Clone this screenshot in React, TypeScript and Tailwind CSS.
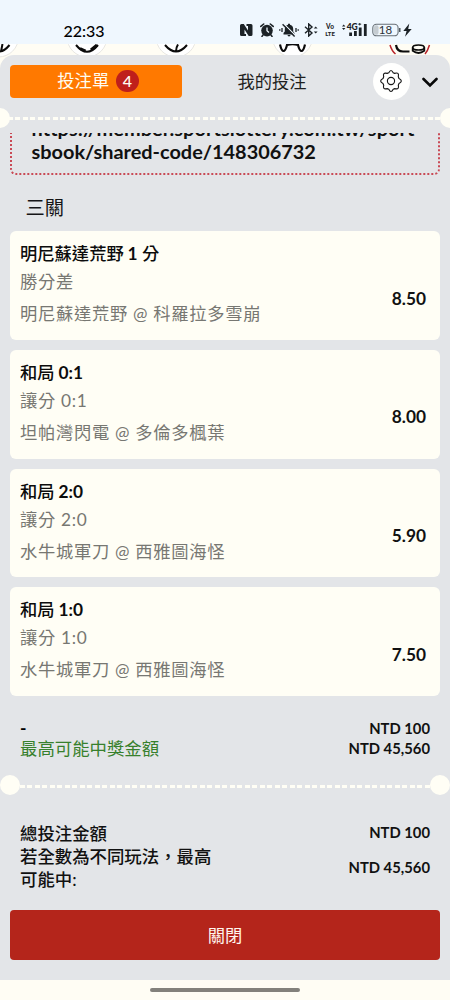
type Bet = {
    id: number;
    pick: string;
    score: string;
    unit?: string;
    market: string;
    match: string;
    odds: string;
};

const bets: Bet[] = [
    { id: 1, pick: '明尼蘇達荒野', score: '1', unit: '分', market: '勝分差', match: '明尼蘇達荒野 @ 科羅拉多雪崩', odds: '8.50' },
    { id: 2, pick: '和局', score: '0:1', market: '讓分 0:1', match: '坦帕灣閃電 @ 多倫多楓葉', odds: '8.00' },
    { id: 3, pick: '和局', score: '2:0', market: '讓分 2:0', match: '水牛城軍刀 @ 西雅圖海怪', odds: '5.90' },
    { id: 4, pick: '和局', score: '1:0', market: '讓分 1:0', match: '水牛城軍刀 @ 西雅圖海怪', odds: '7.50' },
];

function StatusBar() {
    return (
        <div className="flex h-11 items-start bg-[#eff7fe] pt-[23px] text-[#1c2226]">
            <span className="ml-[63.5px] w-[176.5px] text-[16px] leading-[15px] font-medium text-black">22:33</span>
            {/* nfc */}
            <svg className="h-[14px] w-[13px] shrink-0" viewBox="0 0 13 14">
                <path d="M1.5 1h2.3l4.2 6.500V3H6.5V1H11a1.5 1.5 0 0 1 1.5 1.5v9A1.5 1.5 0 0 1 11 13H8.7L4.5 6.500V11H6v2H1.5A1.5 1.5 0 0 1 0 11.500v-9A1.5 1.5 0 0 1 1.5 1z" fill="currentColor" />
            </svg>
            {/* alarm */}
            <svg className="ml-[6.5px] h-[14px] w-[14px] shrink-0" viewBox="0 0 14 14">
                <circle cx="7" cy="7.6" r="5.8" fill="currentColor" />
                <path d="M.8 3.4 3.7 1M13.2 3.4 10.3 1M3 12l-1 1.4M11 12l1 1.4" stroke="currentColor" strokeWidth="1.6" strokeLinecap="round" />
                <path d="M7 4.4v3.4l2 1.6" stroke="#eff7fe" strokeWidth="1.3" fill="none" />
            </svg>
            {/* silent */}
            <svg className="ml-[5px] h-[14px] w-[20px] shrink-0" viewBox="0 0 20 14">
                <path d="M4.5 11.500V10l1.3-1.500V6C5.8 3.600 7.3 2.100 9 1.800V.8h2v1c1.7.3 3.2 1.8 3.2 4.2v2.500L15.500 10v1.500zM8.2 12h3.6L10 13.800z" fill="currentColor" />
                <path d="m4.6.6 12 12.2" stroke="#eff7fe" strokeWidth="1.3" />
                <path d="m3.6 1.3 12 12.2" stroke="currentColor" strokeWidth="1.4" />
                <path d="M3 5v4M.8 6.2v1.6M17 5v4M19.2 6.2v1.6" stroke="currentColor" strokeWidth="1.3" />
            </svg>
            {/* bluetooth */}
            <svg className="ml-[5px] h-[14px] w-[14px] shrink-0" viewBox="0 0 14 14">
                <path d="m1 3.8 7 6.2-3.3 3V1L8 4 1 10.2" stroke="currentColor" strokeWidth="1.4" fill="none" />
                <path d="m9.8 5.6 1.9-2 1.9 2zM9.8 8.4l1.9 2 1.9-2z" fill="currentColor" />
            </svg>
            <div className="ml-[7px] w-[11px] shrink-0 text-center text-[6.5px] leading-[7px] font-black">
                <div>Vo</div>
                <div className="text-[6px]">LTE</div>
            </div>
            {/* 4G signal */}
            <svg className="ml-[6px] h-[14px] w-[26px] shrink-0" viewBox="0 0 26 14">
                <path d="m0 3.6 1.7-2 1.7 2zM0 5l1.7 2 1.7-2z" fill="currentColor" />
                <text x="4.7" y="6.8" fontSize="8.5" fontWeight="900" fill="currentColor">4G</text>
                <path d="M16.2 1.2h3M17.7 0v2.4" stroke="currentColor" strokeWidth=".9" />
                <path d="M7.2 9.5h2.8V13H7.2zM12 8h2.8v5H12zM16.8 4.5h2.8V13h-2.8zM21.9 1h2.8v12h-2.8z" fill="currentColor" />
            </svg>
            {/* battery */}
            <svg className="ml-[4.5px] h-[14px] w-[29px] shrink-0" viewBox="0 0 29 14">
                <rect x="2" y="2.3" width="4.5" height="9.5" rx="2" fill="#c5ccd1" />
                <rect x=".8" y="1.3" width="25.3" height="11.5" rx="3.6" fill="none" stroke="#687077" strokeWidth="1.1" />
                <path d="M27.8 5v4" stroke="#394147" strokeWidth="1.3" />
                <text x="13.5" y="11.2" fontSize="11.5" textAnchor="middle" fill="#2c3236">18</text>
            </svg>
            <svg className="ml-[2px] h-[14px] w-[9px] shrink-0" viewBox="0 0 9 14">
                <path d="M6.3.5.3 8h3.3L2 13.700 8.700 6H5.200z" fill="currentColor" />
            </svg>
        </div>
    );
}

// Lower edge of the sport category icons peeking out above the slip
function SportIcons() {
    return (
        <svg className="block h-[22px] w-full bg-[#fffdf4]" viewBox="0 44 450 22" fill="none" stroke="#0b0b0b" strokeWidth="2">
            <g fill="#fff" stroke="#e8e7e2" strokeWidth="1">
                <circle cx="-1.5" cy="37" r="20" />
                <circle cx="87" cy="37" r="20" />
                <circle cx="176" cy="37" r="20" />
                <circle cx="292.5" cy="37" r="20" />
            </g>
            <path d="M-12 45q11 13 21.500 0M1 51.500l1.500-7.500" />
            <path d="M76 45q11 13.500 22 0" />
            <path d="M80 48.500l5.500 2.500M91 50l6-5" strokeWidth="3" />
            <path d="M165 45q11 13 22 0M176 51.500q0-4 2-7" />
            <path d="M280 44.500q1.500 6.500 3.500 6.500t3.500-6q5.500-1.500 11 0 1.500 6 3.500 6t3.500-6.500" strokeWidth="2.2" />
            <path d="M390 45q1.800 6 5.500 9M429.500 45q-1.800 6-4.500 9" stroke="#b9252c" strokeWidth="1.5" />
            <path d="M396 45q1 6.500 7 6.500h6.500" strokeWidth="2.2" />
            <ellipse cx="418.5" cy="47.5" rx="5.8" ry="2.5" strokeWidth="1.7" />
            <path d="M412.700 47.500v3.300q5.800 4.400 11.600 0v-3.300" strokeWidth="1.8" />
        </svg>
    );
}

function DashedLine() {
    return (
        <div className="h-[3px] w-full bg-[repeating-linear-gradient(90deg,#fffef5_0px,#fffef5_5px,transparent_5px,transparent_7.5px)]" />
    );
}

function SlipHeader() {
    return (
        <div className="flex h-[51px] items-start pt-[9.5px] pl-[10px]">
            <button className="flex h-[33px] w-[172px] items-center justify-center gap-[7px] rounded bg-[#ff7900] pl-[4px] text-[17.3px] leading-none text-[#fffdf2]">
                投注單
                <span className="flex size-[22.5px] items-center justify-center rounded-full bg-[#bf1f1b] text-[16px] font-medium">4</span>
            </button>
            <button className="flex h-[33px] w-[180px] items-center justify-center pt-[1px] text-[17.3px] leading-none text-[#1e1e20]">我的投注</button>
            <button className="-mt-[2px] ml-[10.5px] flex size-[37.5px] items-center justify-center rounded-full bg-[#fffffe]">
                <svg className="size-[24px]" viewBox="0 0 24 24" fill="none" stroke="#161616" strokeWidth="1.15" strokeLinejoin="round">
                    <path d="M9.800 3.800Q12-.8 14.200 3.800L15.600 4.400Q20.400 2.800 19.300 7.800L20 9.600Q24.700 12 20 14.400L19.300 16.200Q20.600 21 15.800 19.600L14.200 20.200Q12 24.800 9.800 20.200L8.200 19.600Q3.400 21 4.700 16.200L4 14.400Q-.7 12 4 9.600L4.700 7.800Q3.400 3 8.200 4.400z" />
                    <circle cx="12" cy="12" r="3.6" />
                </svg>
            </button>
            <svg className="mt-[12px] ml-[12px] h-[12px] w-[16px]" viewBox="0 0 16 12" fill="none" stroke="#080808" strokeWidth="2.6">
                <path d="m1.5 2 6.500 6.500L14.500 2" strokeLinecap="round" />
            </svg>
        </div>
    );
}

function BetCard({ bet }: { bet: Bet }) {
    return (
        <div className="flex h-[108.8px] justify-between rounded-md bg-[#fffef5] pr-[14px] pl-[10px] text-[17.3px]">
            <div className="pt-[9px]">
                <div className="h-7 leading-7 font-medium text-[#0c0c0c]">
                    {bet.pick} <span className="-ml-[0.5px] font-bold">{bet.score}</span>
                    {bet.unit && <span> {bet.unit}</span>}
                </div>
                <div className="h-7 leading-7 tracking-[0.7px] text-[#777772]">{bet.market}</div>
                <div className="mt-[4px] h-7 leading-7 tracking-[0.7px] text-[#777772]">{bet.match}</div>
            </div>
            <div className="pt-[53.5px] leading-7 font-bold text-[#111]">{bet.odds}</div>
        </div>
    );
}

export default function App() {
    return (
        <div className="h-[1000px] w-[450px] overflow-hidden bg-[#fffdf4] font-['Lato','Noto_Sans_CJK_TC',sans-serif]" lang="zh-Hant">
            <StatusBar />
            <SportIcons />
            <div className="relative -mt-[11px] h-[925px] rounded-t-[14px] bg-[#e3e5e8]">
                <SlipHeader />

                <div className="relative flex h-6 items-center">
                    <span className="absolute -left-[10px] size-5 rounded-full bg-[#fffef5]" />
                    <DashedLine />
                    <span className="absolute -right-[10px] size-5 rounded-full bg-[#fffef5]" />
                </div>

                {/* shared link, scrolled partly under the header */}
                <div className="mx-[10px] mt-[3px] h-[42px] overflow-hidden">
                    <div className="-mt-5 h-[62px] rounded-md border-2 border-dotted border-[#c94a55] pt-[1.5px] pl-[19.5px] text-[19.9px] leading-[23px] font-bold whitespace-nowrap text-[#111]">
                        <div className="tracking-[0.08px]">https://member.sportslottery.com.tw/sport</div>
                        <div>sbook/shared-code/148306732</div>
                    </div>
                </div>

                <h2 className="mt-[19px] h-7 pl-[25.5px] text-[19.3px] leading-7 text-[#151517]">三關</h2>

                <div className="mx-[10px] mt-[9px] flex flex-col gap-[10px]">
                    {bets.map((bet) => (
                        <BetCard key={bet.id} bet={bet} />
                    ))}
                </div>

                <div className="mt-[22px] flex h-10 justify-between pr-5 pl-[20px] text-[17.4px] leading-5">
                    <div>
                        <div className="font-bold">-</div>
                        <div className="pt-[0.5px] text-[#37802c]">最高可能中獎金額</div>
                    </div>
                    <div className="-mt-[0.5px] text-right text-[14.8px] font-bold text-[#111]">
                        <div>NTD 100</div>
                        <div>NTD 45,560</div>
                    </div>
                </div>

                <div className="relative mt-[17px] flex h-5 items-center">
                    <span className="absolute left-0 size-5 rounded-full bg-[#fffef5]" />
                    <div className="mt-[2px] w-full px-5">
                        <DashedLine />
                    </div>
                    <span className="absolute right-0 size-5 rounded-full bg-[#fffef5]" />
                </div>

                <div className="mt-[27px] pr-5 pl-[20px] text-[17.4px] leading-[23px] font-medium text-[#111]">
                    <div className="flex justify-between">
                        <span>總投注金額</span>
                        <span className="-mt-[1px] text-[14.8px] font-bold">NTD 100</span>
                    </div>
                    <div className="flex items-center justify-between">
                        <span className="w-[195px]">
                            若全數為不同玩法，最高
                            <br />
                            可能中:
                        </span>
                        <span className="-mt-[1px] text-[14.8px] font-bold">NTD 45,560</span>
                    </div>
                </div>

                <button className="mx-[10px] mt-[19px] flex h-[50px] w-[430px] items-center justify-center rounded bg-[#b4251b] pt-[1px] text-[17.3px] text-[#fff5ee]">關閉</button>
            </div>
            <div className="mx-auto mt-[7.5px] h-1 w-[150px] rounded-full bg-[#83817b]" />
        </div>
    );
}
